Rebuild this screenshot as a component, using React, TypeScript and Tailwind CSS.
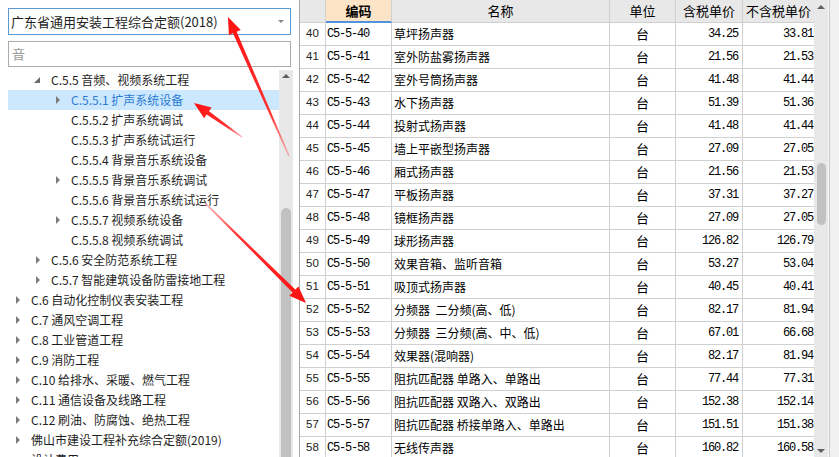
const tree = [
  { lvl: 1, t: 'C.5.5 音频、视频系统工程', icon: 'open' },
  { lvl: 2, t: 'C.5.5.1 扩声系统设备', icon: 'closed', sel: true },
  { lvl: 2, t: 'C.5.5.2 扩声系统调试' },
  { lvl: 2, t: 'C.5.5.3 扩声系统试运行' },
  { lvl: 2, t: 'C.5.5.4 背景音乐系统设备' },
  { lvl: 2, t: 'C.5.5.5 背景音乐系统调试', icon: 'closed' },
  { lvl: 2, t: 'C.5.5.6 背景音乐系统试运行' },
  { lvl: 2, t: 'C.5.5.7 视频系统设备', icon: 'closed' },
  { lvl: 2, t: 'C.5.5.8 视频系统调试' },
  { lvl: 1, t: 'C.5.6 安全防范系统工程', icon: 'closed' },
  { lvl: 1, t: 'C.5.7 智能建筑设备防雷接地工程', icon: 'closed' },
  { lvl: 0, t: 'C.6 自动化控制仪表安装工程', icon: 'closed' },
  { lvl: 0, t: 'C.7 通风空调工程', icon: 'closed' },
  { lvl: 0, t: 'C.8 工业管道工程', icon: 'closed' },
  { lvl: 0, t: 'C.9 消防工程', icon: 'closed' },
  { lvl: 0, t: 'C.10 给排水、采暖、燃气工程', icon: 'closed' },
  { lvl: 0, t: 'C.11 通信设备及线路工程', icon: 'closed' },
  { lvl: 0, t: 'C.12 刷油、防腐蚀、绝热工程', icon: 'closed' },
  { lvl: 0, t: '佛山市建设工程补充综合定额(2019)', icon: 'closed' },
  { lvl: 0, t: '设计费用' },
];

const indent = ['pl-[5px]', 'pl-[25px]', 'pl-[45px]'];

const rows: [number, string, string, string, string][] = [
  [40, 'C5-5-40', '草坪扬声器', '34.25', '33.81'],
  [41, 'C5-5-41', '室外防盐雾扬声器', '21.56', '21.53'],
  [42, 'C5-5-42', '室外号筒扬声器', '41.48', '41.44'],
  [43, 'C5-5-43', '水下扬声器', '51.39', '51.36'],
  [44, 'C5-5-44', '投射式扬声器', '41.48', '41.44'],
  [45, 'C5-5-45', '墙上平嵌型扬声器', '27.09', '27.05'],
  [46, 'C5-5-46', '厢式扬声器', '21.56', '21.53'],
  [47, 'C5-5-47', '平板扬声器', '37.31', '37.27'],
  [48, 'C5-5-48', '镜框扬声器', '27.09', '27.05'],
  [49, 'C5-5-49', '球形扬声器', '126.82', '126.79'],
  [50, 'C5-5-50', '效果音箱、监听音箱', '53.27', '53.04'],
  [51, 'C5-5-51', '吸顶式扬声器', '40.45', '40.41'],
  [52, 'C5-5-52', '分频器  二分频(高、低)', '82.17', '81.94'],
  [53, 'C5-5-53', '分频器  三分频(高、中、低)', '67.01', '66.68'],
  [54, 'C5-5-54', '效果器(混响器)', '82.17', '81.94'],
  [55, 'C5-5-55', '阻抗匹配器 单路入、单路出', '77.44', '77.31'],
  [56, 'C5-5-56', '阻抗匹配器 双路入、双路出', '152.38', '152.14'],
  [57, 'C5-5-57', '阻抗匹配器 桥接单路入、单路出', '151.51', '151.38'],
  [58, 'C5-5-58', '无线传声器', '160.82', '160.58'],
];

const arrowPts = (x1: number, y1: number, x2: number, y2: number) => {
  const dx = x2 - x1;
  const dy = y2 - y1;
  const len = Math.hypot(dx, dy);
  const ux = dx / len;
  const uy = dy / len;
  const nx = -uy;
  const ny = ux;
  const hl = 17;
  const bx = x2 - ux * hl;
  const by = y2 - uy * hl;
  const p = (x: number, y: number, k: number) => `${x + nx * k},${y + ny * k}`;
  return [p(x1, y1, 0.7), p(bx, by, 2), p(bx, by, 6.5), `${x2},${y2}`, p(bx, by, -6.5), p(bx, by, -2), p(x1, y1, -0.7)].join(' ');
};

const arrows = [
  { id: 'a1', x1: 289, y1: 156, x2: 228, y2: 17 },
  { id: 'a2', x1: 242, y1: 137, x2: 194, y2: 103 },
  { id: 'a3', x1: 205, y1: 203, x2: 306, y2: 303 },
];

const Caret = ({ icon }: { icon?: string }) => {
  if (icon === 'closed')
    return <span className="ml-[3px] w-0 h-0 border-y-[4px] border-y-transparent border-l-[4px] border-l-[#7c7c7c]" />;
  if (icon === 'open')
    return (
      <svg width="6" height="6" className="ml-[1px]">
        <polygon points="6,0 6,6 0,6" fill="#6a6a6a" />
      </svg>
    );
  return null;
};

export default function App() {
  return (
    <div className="relative flex w-[839px] h-[457px] overflow-hidden bg-white text-[#1e1e1e] font-['Noto_Sans_CJK_SC',sans-serif]">
      {/* left: quota tree */}
      <div className="w-[299px] shrink-0 flex flex-col">
        <div className="mx-2 mt-2 h-[27px] border border-[#5b9bd5] flex items-center pl-[2px] pr-[6px] text-[13px]">
          <span className="flex-1">广东省通用安装工程综合定额(2018)</span>
          <span className="w-0 h-0 border-x-[3px] border-x-transparent border-t-[3px] border-t-[#8a8a8a]" />
        </div>
        <div className="mx-2 mt-[6px] h-[26px] border border-[#ababab] flex items-center pl-[3px] text-[13px] text-[#9a9a9a]">
          音
        </div>
        <div className="flex flex-1 mt-[3px] min-h-0">
          <div className="w-[271px] ml-2 flex flex-col">
            {tree.map((n) => (
              <div
                key={n.t}
                className={`h-[20px] shrink-0 flex items-center text-[12px] ${indent[n.lvl]} ${n.sel ? 'bg-[#cce8ff] text-[#2b7bd2]' : ''}`}
              >
                <span className="w-[18px] flex items-center">
                  <Caret icon={n.icon} />
                </span>
                <span className="whitespace-pre">{n.t}</span>
              </div>
            ))}
          </div>
          <div className="w-[14px] bg-[#e8e8e8] flex flex-col items-center">
            <span className="mt-[4px] w-0 h-0 border-x-[4px] border-x-transparent border-b-[4px] border-b-[#606060]" />
            <div className="mt-[130px] w-[10px] flex-1 rounded-t-full bg-[#c1c1c1]" />
          </div>
        </div>
      </div>

      {/* right: quota grid */}
      <div className="flex-1 flex border-l border-[#a8a8a8]">
        <div className="w-[514px] grid grid-cols-[26px_66px_218px_66px_67px_71px] auto-rows-[23px] text-[12px] text-black content-start">
          <div className="bg-[#e8e8e8] border-r border-b border-[#d0d0d0]" />
          <div className="bg-[#fde4c6] border-r border-b-2 border-r-[#d0d0d0] border-b-[#4f94dc] flex items-center justify-center font-bold text-[13px]">
            编码
          </div>
          <div className="bg-[#e8e8e8] border-r border-b border-[#d0d0d0] flex items-center justify-center text-[13px]">名称</div>
          <div className="bg-[#e8e8e8] border-r border-b border-[#d0d0d0] flex items-center justify-center text-[13px]">单位</div>
          <div className="bg-[#e8e8e8] border-r border-b border-[#d0d0d0] flex items-center justify-center text-[13px]">含税单价</div>
          <div className="bg-[#e8e8e8] border-b border-[#d0d0d0] flex items-center justify-center text-[13px]">不含税单价</div>
          {rows.map((r) => (
            <div key={r[0]} className="contents">
              <div className="border-r border-b border-[#d0d0d0] flex items-center justify-center font-['Liberation_Sans',sans-serif] text-[11.5px] text-[#222]">
                {r[0]}
              </div>
              <div className="border-r border-b border-[#d0d0d0] flex items-center pl-[1px] font-['Liberation_Mono',monospace] tracking-[-1.2px]">
                {r[1]}
              </div>
              <div className="border-r border-b border-[#d0d0d0] flex items-center pl-[2px] whitespace-pre overflow-hidden">{r[2]}</div>
              <div className="border-r border-b border-[#d0d0d0] flex items-center justify-center text-[13px]">台</div>
              <div className="border-r border-b border-[#d0d0d0] flex items-center justify-end pr-[4px] font-['Liberation_Mono',monospace] tracking-[-1.2px]">
                {r[3]}
              </div>
              <div className="border-b border-[#d0d0d0] flex items-center justify-end pr-[1px] font-['Liberation_Mono',monospace] tracking-[-1.2px]">
                {r[4]}
              </div>
            </div>
          ))}
        </div>
        <div className="w-[14px] bg-[#e8e8e8] flex flex-col items-center">
          <span className="mt-[5px] w-0 h-0 border-x-[4px] border-x-transparent border-b-[4px] border-b-[#606060]" />
          <div className="mt-[154px] w-[9px] h-[62px] rounded-full bg-[#c1c1c1]" />
          <span className="mt-auto mb-[4px] w-0 h-0 border-x-[4px] border-x-transparent border-t-[4px] border-t-[#606060]" />
        </div>
        <div className="w-px bg-[#f7f7f7]" />
        <div className="w-px bg-[#c8c8c8]" />
        <div className="flex-1 bg-[#f1f1f1]" />
      </div>

      {/* red annotation arrows */}
      <svg className="absolute inset-0 pointer-events-none" width="839" height="457">
        <defs>
          {arrows.map((a) => (
            <linearGradient key={a.id} id={a.id} gradientUnits="userSpaceOnUse" x1={a.x1} y1={a.y1} x2={a.x2} y2={a.y2}>
              <stop offset="0" stopColor="#ff6a6a" stopOpacity="0.5" />
              <stop offset="0.3" stopColor="#ff2a2a" stopOpacity="0.95" />
              <stop offset="1" stopColor="#ff1010" />
            </linearGradient>
          ))}
        </defs>
        {arrows.map((a) => (
          <polygon key={a.id} points={arrowPts(a.x1, a.y1, a.x2, a.y2)} fill={`url(#${a.id})`} />
        ))}
      </svg>
    </div>
  );
}
